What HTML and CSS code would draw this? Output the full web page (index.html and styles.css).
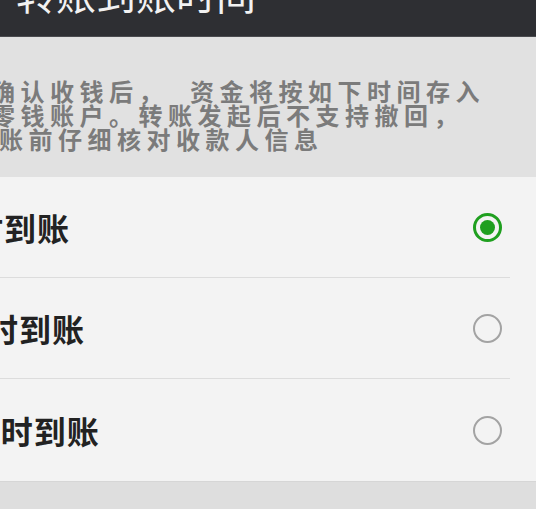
FILE: index.html
```html
<!DOCTYPE html>
<html lang="zh-CN">
<head>
    <meta charset="UTF-8">
    <meta name="viewport" content="width=device-width, initial-scale=1.0">
    <title>转账到账时间</title>
    <link rel="stylesheet" href="styles.css">
</head>
<body>
    <div class="wrap">
        <div class="top_bar">
            <h1 class="tit">转账到账时间</h1>
        </div>
        <div class="desc_box">
            <p class="desc">对方确认收钱后，&nbsp;&nbsp;资金将按如下时间存入<br>对方零钱账户。转账发起后不支持撤回，<br><span class="last">请转账前仔细核对收款人信息</span></p>
        </div>
        <div class="opt_list">
            <label class="opt">
                <span class="opt_name">实时到账</span>
                <span class="radio on"></span>
            </label>
            <label class="opt">
                <span class="opt_name"><span class="num">2</span>小时到账</span>
                <span class="radio"></span>
            </label>
            <label class="opt">
                <span class="opt_name"><span class="num">24</span>小时到账</span>
                <span class="radio"></span>
            </label>
        </div>
    </div>
</body>
</html>
```

FILE: styles.css
```css
*{margin:0;padding:0;box-sizing:border-box;}
body{background-color:#dedede;font-family:"Noto Sans CJK SC","Noto Sans",sans-serif;overflow:hidden;}
.wrap{width:536px;height:509px;overflow:hidden;}

/* 상단 타이틀 */
.top_bar{height:37px;background-color:#2e2f33;border-bottom:1px solid #4a4b4f;overflow:hidden;}
.top_bar .tit{margin-top:-27px;padding-left:16px;font-size:40px;line-height:40px;font-weight:400;color:#f2f2f2;letter-spacing:0;}

/* 안내 문구 */
.desc_box{height:140px;padding-top:42px;background-color:#e1e1e1;overflow:hidden;}
.desc{margin-left:-68px;font-size:24px;line-height:24px;font-weight:700;color:#7b7b7b;letter-spacing:5.5px;white-space:nowrap;}
.desc .last{position:relative;left:8px;}

/* 옵션 목록 */
.opt_list{background-color:#f3f3f3;border-bottom:1px solid #d6d6d6;}
.opt{display:flex;align-items:center;justify-content:space-between;height:101px;margin-right:26px;padding-right:8px;border-bottom:1px solid #dcdcdc;cursor:pointer;}
.opt:last-child{border-bottom:0;height:102px;}
.opt_name{margin-left:-62px;font-size:32px;font-weight:700;color:#222;letter-spacing:1px;}
.opt_name .num{letter-spacing:-4px;}

.radio{position:relative;width:29px;height:29px;border:2px solid #a3a3a3;border-radius:50%;}
.radio.on{border:3px solid #1f9f1f;}
.radio.on:after{content:'';position:absolute;top:4px;left:4px;width:15px;height:15px;border-radius:50%;background-color:#1f9f1f;}
```
